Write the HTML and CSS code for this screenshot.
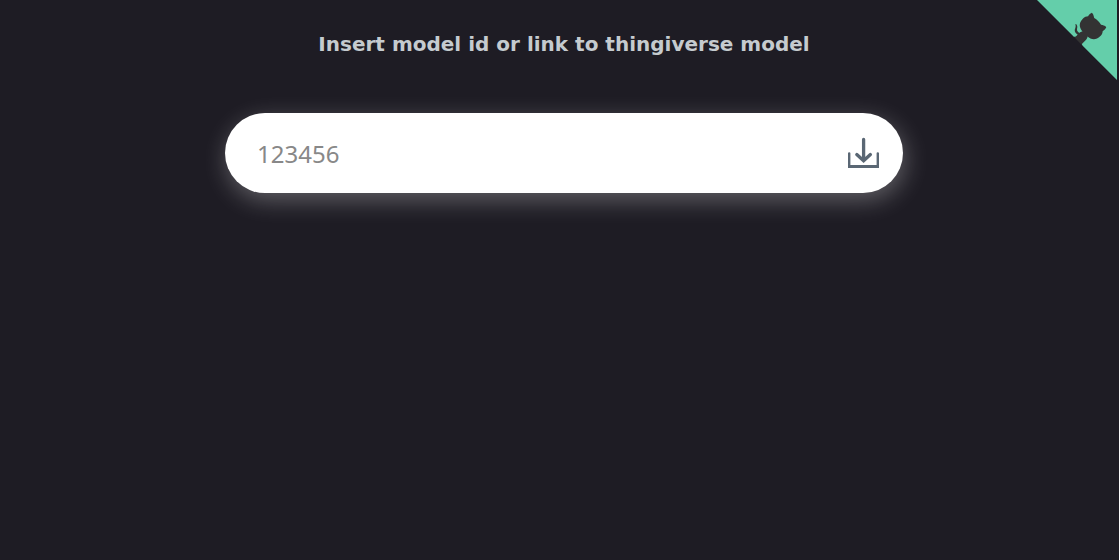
FILE: index.html
```html
<!DOCTYPE html>
<html lang="en">
<head>
<meta charset="utf-8">
<title>Thingiverse downloader</title>
<meta name="viewport" content="width=device-width, initial-scale=1">
<link rel="stylesheet" href="styles.css">
</head>
<body>
<a class="corner" href="#" aria-label="View source on GitHub">
  <svg class="corner-art" viewBox="0 0 250 250" aria-hidden="true">
    <path class="corner-fill" d="M0,0 L115,115 L130,115 L142,142 L250,250 L250,0 Z"/>
    <path d="M128.3,109.0 C113.8,99.7 119.0,89.6 119.0,89.6 C122.0,82.7 120.5,78.6 120.5,78.6 C119.2,72.0 123.4,76.3 123.4,76.3 C127.3,80.9 125.5,87.3 125.5,87.3 C122.9,97.6 130.6,101.9 134.4,103.2"/>
    <path d="M115.0,115.0 C114.9,115.1 118.7,116.5 119.8,115.4 L133.7,101.6 C136.9,99.2 139.9,98.4 142.2,98.6 C133.8,88.0 127.5,74.4 143.8,58.0 C148.5,53.4 154.0,51.2 159.7,51.0 C160.3,49.4 163.2,43.6 171.4,40.1 C171.4,40.1 176.1,42.5 178.8,56.2 C183.1,58.6 187.2,61.8 190.9,65.4 C194.5,69.0 197.7,73.2 200.1,77.6 C213.8,80.2 216.3,84.9 216.3,84.9 C212.7,93.1 206.9,96.0 205.4,96.6 C205.1,102.4 203.0,107.8 198.3,112.5 C181.9,128.9 168.3,122.5 157.7,114.1 C157.9,116.9 156.7,120.9 152.7,124.9 L141.0,136.5 C139.8,137.7 141.6,141.9 141.8,141.8 Z"/>
  </svg>
</a>
<main class="page">
  <label class="title" for="model">Insert model id or link to thingiverse model</label>
  <form class="search">
    <input class="search-input" id="model" type="text" placeholder="123456">
    <button class="search-button" type="button" aria-label="Download">
      <svg class="search-icon" viewBox="0 0 32 32" aria-hidden="true">
        <path class="tray" d="M0 16.3Q0 15.3 1.2 15.3Q2.4 15.3 2.4 16.3V28H28.6V16.3Q28.6 15.3 29.8 15.3Q31 15.3 31 16.3V31H0Z"/>
        <path class="arrow" d="M15.6 2.5V23.5M8.8 17.5L15.6 23.8L22.4 17.5"/>
      </svg>
    </button>
  </form>
</main>
</body>
</html>
```
FILE: styles.css
```css
* {
  box-sizing: border-box;
}

body {
  margin: 0;
  background: #1e1c24;
  font-family: "DejaVu Sans", sans-serif;
}

.page {
  display: flex;
  flex-direction: column;
  align-items: center;
  gap: 57px;
  padding: 32px 0 32px 9px;
}

.title {
  color: #c5cbcf;
  font-size: 20px;
  font-weight: 700;
  line-height: 24px;
  text-align: center;
}

.search {
  display: flex;
  align-items: center;
  width: 90%;
  max-width: 678px;
  height: 80px;
  padding: 0 23px 0 32px;
  border-radius: 40px;
  background: #fff;
  box-shadow: 2px 7px 24px rgba(255, 255, 255, 0.3);
}

.search-input {
  flex: 1;
  min-width: 0;
  height: 48px;
  padding: 0;
  border: 0;
  outline: 0;
  background: transparent;
  color: #333;
  font-family: "Noto Sans", sans-serif;
  font-size: 24px;
}

.search-input::placeholder {
  color: #888;
  opacity: 1;
}

.search-button {
  display: flex;
  padding: 0;
  border: 0;
  background: transparent;
  cursor: pointer;
}

.search-icon {
  width: 32px;
  height: 32px;
}

.tray {
  fill: #5a6774;
}

.arrow {
  fill: none;
  stroke: #5a6774;
  stroke-width: 3.3;
  stroke-linecap: round;
}

.corner {
  position: absolute;
  top: 0;
  right: 2px;
  color: #333;
}

.corner-art {
  display: block;
  width: 80px;
  height: 80px;
  fill: currentColor;
}

.corner-fill {
  fill: #64ceaa;
}
```
